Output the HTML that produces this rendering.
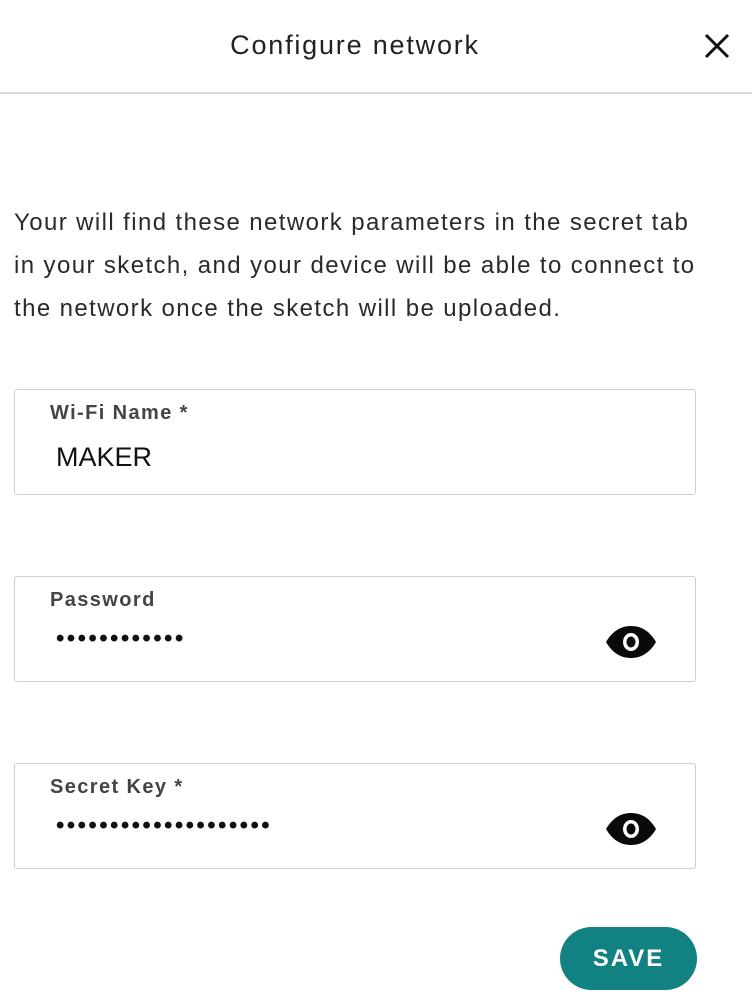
<!DOCTYPE html>
<html><head><meta charset="utf-8"><style>
body{margin:0;width:752px;height:1001px;background:#fff;font-family:"Liberation Sans",sans-serif;position:relative;overflow:hidden;color:#1a1a1a}
.hdr{position:absolute;left:0;top:0;width:752px;height:92px;border-bottom:2px solid #dcdcdc}
.title{position:absolute;left:0;width:710px;top:30px;text-align:center;font-size:27px;letter-spacing:1.8px;color:#222}
.x{position:absolute;left:703px;top:32px}
.p{position:absolute;left:14px;top:201px;width:740px;white-space:nowrap;font-size:24px;letter-spacing:1.4px;line-height:43px;color:#2a2a2a}
.box{position:absolute;left:14px;width:682px;height:106px;border:1px solid #cfcfcf;border-radius:3px;box-sizing:border-box}
.lab{position:absolute;left:35px;top:12px;font-size:20px;font-weight:bold;letter-spacing:1.4px;color:#444}
.val{position:absolute;left:41px;top:52px;font-size:27px;color:#111}
.dots{position:absolute;left:41px;top:48px;font-size:24px;letter-spacing:2.4px;color:#111;font-weight:bold}
.eye{position:absolute;left:590px;top:49px}
.save{position:absolute;left:560px;top:927px;width:137px;height:63px;border-radius:32px;background:#128181;color:#fff;font-weight:bold;font-size:24px;letter-spacing:2px;text-align:center;line-height:63px}
</style></head><body>
<div class="hdr"><div class="title">Configure network</div>
<svg class="x" width="28" height="28" viewBox="0 0 28 28"><path d="M3 3L25 25M25 3L3 25" stroke="#111" stroke-width="3"/></svg></div>
<div class="p">Your will find these network parameters in the secret tab<br>in your sketch, and your device will be able to connect to<br>the network once the sketch will be uploaded.</div>
<div class="box" style="top:389px"><div class="lab">Wi-Fi Name *</div><div class="val">MAKER</div></div>
<div class="box" style="top:576px"><div class="lab">Password</div><div class="dots">••••••••••••</div>
<svg class="eye" width="52" height="32" viewBox="0 0 52 32"><path d="M1 16C8 4 17 0 26 0S44 4 51 16C44 28 35 32 26 32S8 28 1 16Z" fill="#0a0a0a"/><ellipse cx="26" cy="16" rx="8" ry="9" fill="#fff"/><ellipse cx="26" cy="16" rx="4.5" ry="5.5" fill="#0a0a0a"/></svg></div>
<div class="box" style="top:763px"><div class="lab">Secret Key *</div><div class="dots">••••••••••••••••••••</div>
<svg class="eye" width="52" height="32" viewBox="0 0 52 32"><path d="M1 16C8 4 17 0 26 0S44 4 51 16C44 28 35 32 26 32S8 28 1 16Z" fill="#0a0a0a"/><ellipse cx="26" cy="16" rx="8" ry="9" fill="#fff"/><ellipse cx="26" cy="16" rx="4.5" ry="5.5" fill="#0a0a0a"/></svg></div>
<div class="save">SAVE</div>
</body></html>
